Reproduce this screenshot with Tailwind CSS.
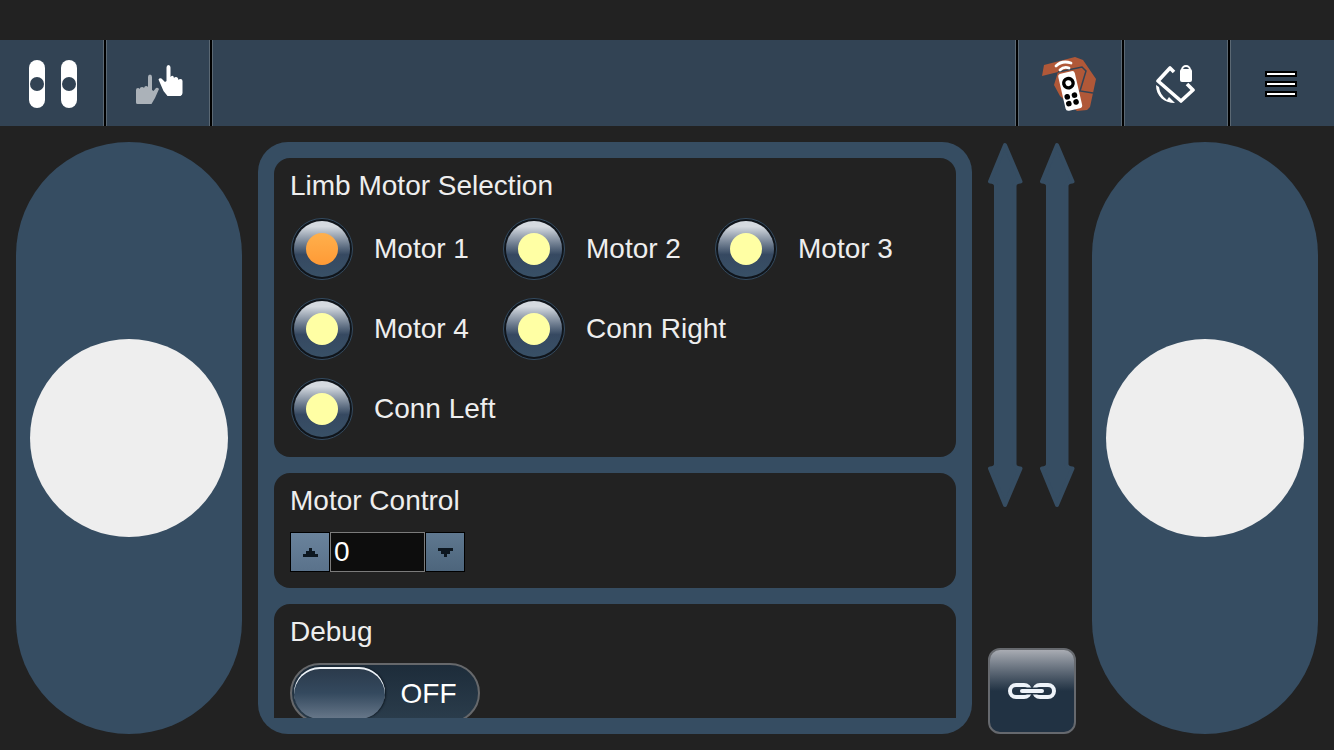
<!DOCTYPE html>
<html lang="en">
<head>
    <meta charset="UTF-8">
    <meta name="viewport" content="width=device-width, initial-scale=1.0">
    <title>Limb Motor Control</title>
    <script src="https://cdn.jsdelivr.net/npm/@tailwindcss/browser@4"></script>
</head>
<body class="bg-[#222222] text-[#eeeeee] font-['Liberation_Sans',Arial,sans-serif] text-[28px] leading-8">
    <div class="h-screen flex flex-col pt-10 overflow-hidden">
        <!-- Toolbar -->
        <header class="flex h-[86px] shrink-0 bg-[#324354]">
            <button type="button" aria-label="Joysticks" class="w-[106px] pt-[2px] pl-[2px] flex items-center justify-center border-r-2 border-black shadow-[inset_-1px_0_#5b6873]">
                <svg class="w-12 h-12" viewBox="0 0 48 48">
                    <rect width="16" height="48" rx="8" fill="#fff"/>
                    <rect x="32" width="16" height="48" rx="8" fill="#fff"/>
                    <circle cx="8" cy="24" r="7" fill="#324354"/>
                    <circle cx="40" cy="24" r="7" fill="#324354"/>
                </svg>
            </button>
            <button type="button" aria-label="Touch mode" class="w-[106px] pt-[2px] pl-[2px] flex items-center justify-center border-r-2 border-black shadow-[inset_1px_0_#5b6873,inset_-1px_0_#5b6873]">
                <svg class="w-12 h-12" viewBox="0 -5 48 48">
                    <path fill="#abb2b9" d="M13 12q0-2.500 2-2.500t2 2.500v13l1.500 1 2.500-3q1.500-1 3 1l-4 9-3.500 6H2.500q-1.500 0-1.500-1.500V25q0-2 2-2 1 0 1.500 1 .500-2 2.500-2 1.500 0 2 1 .500-2 2-2 1.500 0 2 1z"/>
                    <path fill="#fff" d="M35.500 2.500Q35.500 0 33.500 0t-2 2.500V16l-1.500 1-3.500-3.500q-2-1-3 1l5 11.500 4 5H45.500q2-1 2-3V16q0-2-2-2-1.500 0-2 1-.500-3-2.500-3-1.500 0-2 1-.500-3-2.500-2l-1 1z"/>
                </svg>
            </button>
            <div class="flex-1 border-r-2 border-black shadow-[inset_1px_0_#5b6873,inset_-1px_0_#5b6873]"></div>
            <button type="button" aria-label="Remote" class="w-[106px] pt-[2px] pr-[2px] flex items-center justify-center border-r-2 border-black shadow-[inset_1px_0_#5b6873,inset_-1px_0_#5b6873]">
                <svg class="w-14 h-14" viewBox="0 0 56 56">
                    <path fill="#b05838" d="M3 9 34 1 42 4 55 23 49 51 46 54 36 55 19 40 13 29 17 16 1 20z"/>
                    <path fill="none" stroke="#324354" stroke-width="1.500" d="M17 16 41 11 45 15 39 35 52 37"/>
                    <g fill="none" stroke="#fff" stroke-width="2.800" stroke-linecap="round">
                        <path d="M15 10Q21 4 30 7"/>
                        <path d="M19 14Q23 10 28 12"/>
                    </g>
                    <g transform="rotate(-13 29 34)">
                        <rect x="20.500" y="16" width="17" height="38" rx="3" fill="#fff"/>
                        <circle cx="29" cy="27" r="4.700" fill="#fff" stroke="#000" stroke-width="3.400"/>
                        <circle cx="24.800" cy="40" r="2.800"/>
                        <circle cx="32.200" cy="40" r="2.800"/>
                        <circle cx="24.800" cy="47" r="2.800"/>
                        <circle cx="32.200" cy="47" r="2.800"/>
                    </g>
                </svg>
            </button>
            <button type="button" aria-label="Rotation lock" class="w-[106px] pt-[2px] pr-[2px] flex items-center justify-center border-r-2 border-black shadow-[inset_1px_0_#5b6873,inset_-1px_0_#5b6873]">
                <svg class="w-10 h-10" viewBox="0 0 40 40">
                    <path fill="none" stroke="#fff" stroke-width="3.600" stroke-linejoin="round" d="M19 8 15 4 3 17 26 37 38 26 32 20"/>
                    <path fill="#fff" d="M1 21C1 32 9 39 20 39L14 33 12 36Q5 31 4 23z"/>
                    <rect x="25" y="5" width="12" height="13" rx="2" fill="#fff"/>
                    <path fill="none" stroke="#fff" stroke-width="2" d="M27 7V6a4 4 0 0 1 8 0v1"/>
                </svg>
            </button>
            <button type="button" aria-label="Menu" class="flex-none w-[104px] pt-[2px] pr-[2px] flex flex-col items-center justify-center gap-1 shadow-[inset_1px_0_#5b6873]">
                <span class="w-8 h-[6px] bg-white border-2 border-black"></span>
                <span class="w-8 h-[6px] bg-white border-2 border-black"></span>
                <span class="w-8 h-[6px] bg-white border-2 border-black"></span>
            </button>
        </header>

        <main class="flex-1 min-h-0 flex gap-4 p-4">
            <!-- Left joystick -->
            <div class="w-[226px] shrink-0 rounded-full bg-[#364d62] flex items-center justify-center">
                <button type="button" aria-label="Left joystick" class="size-[198px] rounded-full bg-[#eeeeee]"></button>
            </div>

            <!-- Settings panel -->
            <div class="flex-1 min-w-0 rounded-[30px] bg-[#364d62] p-4">
                <div class="h-full overflow-hidden flex flex-col gap-4">
                    <section class="shrink-0 rounded-2xl bg-[#222222] px-4 pt-3 pb-2">
                        <h2>Limb Motor Selection</h2>
                        <div class="grid grid-cols-[212px_212px_212px] auto-rows-[80px] items-center pt-[7px]">
                            <label class="flex items-center gap-[21px] pl-px whitespace-nowrap">
                                <input type="radio" name="motor" checked class="peer sr-only">
                                <span class="size-[62px] shrink-0 rounded-full border border-[#344b60] p-[2px] bg-[#10151b] flex peer-focus-visible:ring-2">
                                    <span class="flex-1 rounded-full flex items-center justify-center bg-linear-to-b from-[#d5dae0] from-10% via-[#364961] via-60% to-[#385066]">
                                        <span class="size-8 rounded-full bg-linear-to-b from-[#ffb04c] to-[#ff9a35]"></span>
                                    </span>
                                </span>
                                <span>Motor 1</span>
                            </label>
                            <label class="flex items-center gap-[21px] pl-px whitespace-nowrap">
                                <input type="radio" name="motor" class="peer sr-only">
                                <span class="size-[62px] shrink-0 rounded-full border border-[#344b60] p-[2px] bg-[#10151b] flex peer-focus-visible:ring-2">
                                    <span class="flex-1 rounded-full flex items-center justify-center bg-linear-to-b from-[#d5dae0] from-10% via-[#364961] via-60% to-[#385066]">
                                        <span class="size-8 rounded-full bg-[#ffffa4]"></span>
                                    </span>
                                </span>
                                <span>Motor 2</span>
                            </label>
                            <label class="flex items-center gap-[21px] pl-px whitespace-nowrap">
                                <input type="radio" name="motor" class="peer sr-only">
                                <span class="size-[62px] shrink-0 rounded-full border border-[#344b60] p-[2px] bg-[#10151b] flex peer-focus-visible:ring-2">
                                    <span class="flex-1 rounded-full flex items-center justify-center bg-linear-to-b from-[#d5dae0] from-10% via-[#364961] via-60% to-[#385066]">
                                        <span class="size-8 rounded-full bg-[#ffffa4]"></span>
                                    </span>
                                </span>
                                <span>Motor 3</span>
                            </label>
                            <label class="flex items-center gap-[21px] pl-px whitespace-nowrap">
                                <input type="radio" name="motor" class="peer sr-only">
                                <span class="size-[62px] shrink-0 rounded-full border border-[#344b60] p-[2px] bg-[#10151b] flex peer-focus-visible:ring-2">
                                    <span class="flex-1 rounded-full flex items-center justify-center bg-linear-to-b from-[#d5dae0] from-10% via-[#364961] via-60% to-[#385066]">
                                        <span class="size-8 rounded-full bg-[#ffffa4]"></span>
                                    </span>
                                </span>
                                <span>Motor 4</span>
                            </label>
                            <label class="flex items-center gap-[21px] pl-px whitespace-nowrap">
                                <input type="radio" name="motor" class="peer sr-only">
                                <span class="size-[62px] shrink-0 rounded-full border border-[#344b60] p-[2px] bg-[#10151b] flex peer-focus-visible:ring-2">
                                    <span class="flex-1 rounded-full flex items-center justify-center bg-linear-to-b from-[#d5dae0] from-10% via-[#364961] via-60% to-[#385066]">
                                        <span class="size-8 rounded-full bg-[#ffffa4]"></span>
                                    </span>
                                </span>
                                <span>Conn Right</span>
                            </label>
                            <label class="col-start-1 flex items-center gap-[21px] pl-px whitespace-nowrap">
                                <input type="radio" name="motor" class="peer sr-only">
                                <span class="size-[62px] shrink-0 rounded-full border border-[#344b60] p-[2px] bg-[#10151b] flex peer-focus-visible:ring-2">
                                    <span class="flex-1 rounded-full flex items-center justify-center bg-linear-to-b from-[#d5dae0] from-10% via-[#364961] via-60% to-[#385066]">
                                        <span class="size-8 rounded-full bg-[#ffffa4]"></span>
                                    </span>
                                </span>
                                <span>Conn Left</span>
                            </label>
                        </div>
                    </section>

                    <section class="shrink-0 rounded-2xl bg-[#222222] px-4 pt-3 pb-4">
                        <h2><label for="motorValue">Motor Control</label></h2>
                        <div class="flex h-10 mt-[15px]">
                            <button type="button" aria-label="Increase" class="w-10 border border-black bg-linear-to-b from-[#6a839c] to-[#5a728b] flex items-center justify-center">
                                <svg class="w-4 h-[9px]" viewBox="0 0 16 9" fill="#0d1720"><path d="M7 0h3v3h3v3h3v3H1V6h3V3h3z"/></svg>
                            </button>
                            <input id="motorValue" type="text" value="0" class="w-[95px] border border-[#7b7b7b] bg-[#0d0d0d] pl-[3px] text-white outline-none">
                            <button type="button" aria-label="Decrease" class="w-10 border border-black bg-linear-to-b from-[#5f7890] to-[#4d657c] flex items-center justify-center">
                                <svg class="w-4 h-[9px]" viewBox="0 0 16 9" fill="#0d1720"><path d="M1 0h15v3h-3v3h-3v3H7V6H4V3H1z"/></svg>
                            </button>
                        </div>
                    </section>

                    <section class="shrink-0 rounded-2xl bg-[#222222] px-4 pt-3 pb-4">
                        <h2 id="debugTitle">Debug</h2>
                        <label class="mt-[15px] flex w-[190px] h-[60px] rounded-full border-2 border-[#66686b] bg-linear-to-b from-[#1d2c3a] to-[#2b3d4c] p-[2px] text-white">
                            <input type="checkbox" aria-labelledby="debugTitle" class="peer sr-only">
                            <span class="w-[91px] rounded-full bg-linear-to-b from-[#2a394a] via-[#34495e] via-50% to-[#68788a] shadow-[inset_0_2px_#eef3f8,1px_0_2px_#0c151e]"></span>
                            <span class="flex-1 flex items-center justify-center pr-1 pt-[2px]">OFF</span>
                        </label>
                    </section>
                </div>
            </div>

            <!-- Limb extension arrows and link toggle -->
            <div class="w-[88px] shrink-0 flex flex-col justify-between">
                <div class="flex gap-4">
                    <svg class="w-9 h-[366px]" viewBox="0 0 36 366" fill="#364d62" stroke="#364d62" stroke-width="4" stroke-linejoin="round">
                        <path d="M17 3 32.500 39.500Q26.500 40 26.500 44V322Q26.500 326 32.500 326.500L17 363 2 326.500Q8 326 8 322V44Q8 40 2 39.500z"/>
                    </svg>
                    <svg class="w-9 h-[366px]" viewBox="0 0 36 366" fill="#364d62" stroke="#364d62" stroke-width="4" stroke-linejoin="round">
                        <path d="M17 3 32.500 39.500Q26.500 40 26.500 44V322Q26.500 326 32.500 326.500L17 363 2 326.500Q8 326 8 322V44Q8 40 2 39.500z"/>
                    </svg>
                </div>
                <button type="button" aria-label="Link joysticks" class="h-[86px] rounded-xl border-2 border-[#66696e] bg-linear-to-b from-[#a9acb3] via-[#213243] via-50% to-[#213243] flex items-center justify-center">
                    <svg class="w-12 h-[18px]" viewBox="0 0 48 18" fill="none" stroke="#eef3f9" stroke-width="4">
                        <rect x="2" y="3" width="20" height="12" rx="6"/>
                        <rect x="26" y="3" width="20" height="12" rx="6"/>
                        <path stroke="#213243" stroke-width="7" d="M13 9h22"/>
                        <path stroke-linecap="round" d="M14 9h20"/>
                    </svg>
                </button>
            </div>

            <!-- Right joystick -->
            <div class="w-[226px] shrink-0 rounded-full bg-[#364d62] flex items-center justify-center">
                <button type="button" aria-label="Right joystick" class="size-[198px] rounded-full bg-[#eeeeee]"></button>
            </div>
        </main>
    </div>
</body>
</html>
